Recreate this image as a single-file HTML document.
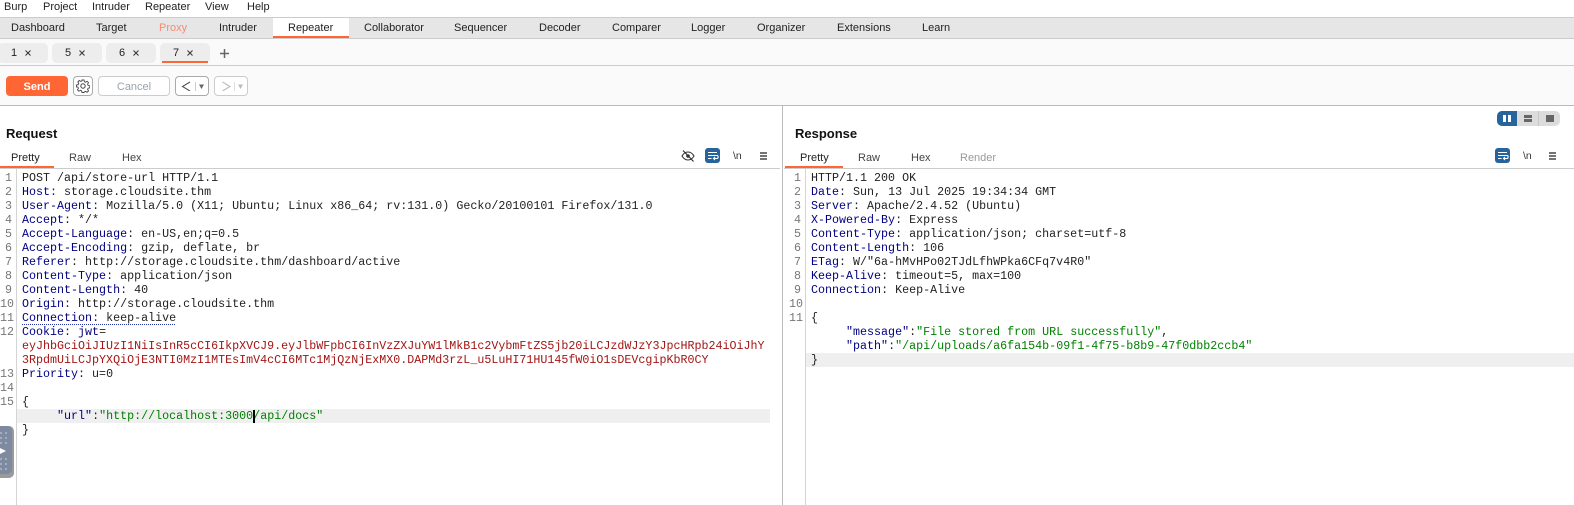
<!DOCTYPE html>
<html><head><meta charset="utf-8">
<style>
html,body{margin:0;padding:0;width:1574px;height:505px;overflow:hidden;background:#fff}
body{position:relative;font-family:"Liberation Sans",sans-serif;font-size:11px;color:#222}
.a{position:absolute;white-space:pre}
.box{position:absolute;box-sizing:border-box}
.m{position:absolute;font-family:"Liberation Mono",monospace;font-size:11.67px;letter-spacing:.01px;line-height:14px;height:14px;white-space:pre;color:#222}
.n{position:absolute;font-family:"Liberation Mono",monospace;font-size:11.67px;line-height:14px;height:14px;color:#777;text-align:right;width:12px}
.k{color:#000080}
.r{color:#a31515}
.g{color:#008000}
.tab{position:absolute;top:18px;height:21px;line-height:21px;font-size:11px;color:#222;white-space:pre}
.st{position:absolute;top:43px;height:20px;width:50px;background:#ededed;border-radius:5px}
.st span{position:absolute;top:4px;font-size:11px;color:#222}
.st svg{position:absolute;top:7px}
.sub{position:absolute;top:152px;font-size:11px;color:#444;white-space:pre}
</style></head><body>

<!-- menu -->
<div class="a" style="left:4px;top:0;line-height:14px">Burp</div>
<div class="a" style="left:43px;top:0;line-height:14px">Project</div>
<div class="a" style="left:92px;top:0;line-height:14px">Intruder</div>
<div class="a" style="left:145px;top:0;line-height:14px">Repeater</div>
<div class="a" style="left:205px;top:0;line-height:14px">View</div>
<div class="a" style="left:247px;top:0;line-height:14px">Help</div>

<!-- primary tabs -->
<div class="box" style="left:0;top:17px;width:1574px;height:22px;background:#e6e6e6;border-top:1px solid #ccc;border-bottom:1px solid #ccc"></div>
<div class="box" style="left:273px;top:18px;width:76px;height:20px;background:#fff;border-bottom:2px solid #ff6633"></div>
<div class="tab" style="left:11px">Dashboard</div>
<div class="tab" style="left:96px">Target</div>
<div class="tab" style="left:159px;color:#f98b73">Proxy</div>
<div class="tab" style="left:219px">Intruder</div>
<div class="tab" style="left:288px">Repeater</div>
<div class="tab" style="left:364px">Collaborator</div>
<div class="tab" style="left:454px">Sequencer</div>
<div class="tab" style="left:539px">Decoder</div>
<div class="tab" style="left:612px">Comparer</div>
<div class="tab" style="left:691px">Logger</div>
<div class="tab" style="left:757px">Organizer</div>
<div class="tab" style="left:837px">Extensions</div>
<div class="tab" style="left:922px">Learn</div>

<!-- subtabs -->
<div class="box" style="left:0;top:39px;width:1574px;height:27px;background:#fafafa;border-bottom:1px solid #ccc"></div>
<div class="st" style="left:-2px;width:50px"><span style="left:13px">1</span><svg style="left:27px" width="6" height="6"><path d="M.5.5l5 5M5.500.5l-5 5" stroke="#333" fill="none"/></svg></div>
<div class="st" style="left:52px"><span style="left:13px">5</span><svg style="left:27px" width="6" height="6"><path d="M.5.5l5 5M5.500.5l-5 5" stroke="#333" fill="none"/></svg></div>
<div class="st" style="left:106px"><span style="left:13px">6</span><svg style="left:27px" width="6" height="6"><path d="M.5.5l5 5M5.500.5l-5 5" stroke="#333" fill="none"/></svg></div>
<div class="st" style="left:160px"><span style="left:13px">7</span><svg style="left:27px" width="6" height="6"><path d="M.5.5l5 5M5.500.5l-5 5" stroke="#333" fill="none"/></svg></div>
<div class="box" style="left:162px;top:61px;width:46px;height:2px;background:#ff6633"></div>
<svg class="box" style="left:220px;top:49px" width="9" height="9"><path d="M4.500 0v9M0 4.500h9" stroke="#666" stroke-width="1.500" fill="none"/></svg>

<!-- toolbar -->
<div class="box" style="left:0;top:66px;width:1574px;height:40px;background:#fafafa;border-bottom:1px solid #bbb"></div>
<div class="box" style="left:6px;top:76px;width:62px;height:20px;background:#ff6633;border-radius:4px;color:#fff;font-weight:bold;font-size:11px;text-align:center;line-height:22px">Send</div>
<div class="box" style="left:73px;top:76px;width:20px;height:20px;border:1px solid #aaa;border-radius:4px;background:#fff"></div>
<svg class="box" style="left:76px;top:79px" width="14" height="14" viewBox="0 0 14 14"><circle cx="7" cy="7" r="2.200" fill="none" stroke="#444"/><path d="M6 1h2l.4 1.700 1.200.5 1.500-.9 1.400 1.400-.9 1.500.5 1.200 1.700.4v2l-1.700.4-.5 1.200.9 1.500-1.400 1.400-1.500-.9-1.200.5L8 13.500H6l-.4-1.700-1.200-.5-1.500.9-1.400-1.400.9-1.500-.5-1.200L.5 8V6l1.700-.4.5-1.200-.9-1.500 1.400-1.400 1.500.9 1.200-.5z" fill="none" stroke="#444" stroke-width=".9"/></svg>
<div class="box" style="left:98px;top:76px;width:72px;height:20px;border:1px solid #ccc;border-radius:4px;background:#fff;color:#9aa3ad;text-align:center;line-height:20px;font-size:11px">Cancel</div>
<div class="box" style="left:175px;top:76px;width:34px;height:20px;border:1px solid #aaa;border-radius:4px;background:#fff"></div>
<svg class="box" style="left:181px;top:81px" width="26" height="10"><path d="M9 1L1.500 5.500 9 10" fill="none" stroke="#555" stroke-width="1.100"/><path d="M14.500 1v9" stroke="#ccc"/><path d="M18 3.500h5l-2.500 4.500z" fill="#666"/></svg>
<div class="box" style="left:214px;top:76px;width:34px;height:20px;border:1px solid #ccc;border-radius:4px;background:#fff"></div>
<svg class="box" style="left:221px;top:81px" width="26" height="10"><path d="M1.500 1L9 5.500 1.500 10" fill="none" stroke="#bbb" stroke-width="1.100"/><path d="M13.500 1v9" stroke="#ddd"/><path d="M17 3.500h5l-2.500 4.500z" fill="#bbb"/></svg>

<!-- panel divider -->
<div class="box" style="left:782px;top:106px;width:1px;height:399px;background:#bbb"></div>

<!-- Request header -->
<div class="a" style="left:6px;top:126px;font-weight:bold;font-size:13px;color:#111">Request</div>
<div class="sub" style="left:11px;color:#222">Pretty</div>
<div class="sub" style="left:69px">Raw</div>
<div class="sub" style="left:122px">Hex</div>
<div class="box" style="left:0;top:168px;width:780px;height:1px;background:#ccc"></div>
<div class="box" style="left:0;top:166px;width:54px;height:2px;background:#ff6633"></div>

<svg class="box" style="left:681px;top:149px" width="14" height="14" viewBox="0 0 14 14"><path d="M1 7c1.500-2.500 3.500-4 6-4s4.500 1.500 6 4c-1.500 2.500-3.500 4-6 4S2.500 9.500 1 7z" fill="none" stroke="#333" stroke-width="1.100"/><circle cx="7" cy="7" r="1.800" fill="#333"/><path d="M2 1.500l10.500 11" stroke="#333" stroke-width="1.200"/></svg>
<div class="box" style="left:705px;top:148px;width:15px;height:15px;background:#27649c;border-radius:3px"></div>
<svg class="box" style="left:705px;top:148px" width="15" height="15"><path d="M3 4.500h9M3 7.500h9c1.500 0 1.500 3 0 3H8.500M3 10.500h3.500M10 9l-1.500 1.500L10 12" fill="none" stroke="#fff" stroke-width="1.100"/></svg>
<div class="a" style="left:733px;top:150px;font-size:10.500px;color:#333">\n</div>
<svg class="box" style="left:760px;top:152px" width="7" height="8"><path d="M0 1h7M0 4h7M0 7h7" stroke="#222" stroke-width="1.300"/></svg>

<!-- Response header -->
<div class="a" style="left:795px;top:126px;font-weight:bold;font-size:13px;color:#111">Response</div>
<div class="sub" style="left:800px;color:#222">Pretty</div>
<div class="sub" style="left:858px">Raw</div>
<div class="sub" style="left:911px">Hex</div>
<div class="sub" style="left:960px;color:#999">Render</div>
<div class="box" style="left:784px;top:168px;width:790px;height:1px;background:#ccc"></div>
<div class="box" style="left:785px;top:166px;width:58px;height:2px;background:#ff6633"></div>

<div class="box" style="left:1497px;top:111px;width:63px;height:15px;background:#dcdcdc;border-radius:5px"></div>
<div class="box" style="left:1497px;top:111px;width:20px;height:15px;background:#27649c;border-radius:5px 0 0 5px"></div>
<div class="box" style="left:1538px;top:111px;width:1px;height:15px;background:#c6c6c6"></div>
<div class="box" style="left:1503px;top:115px;width:3px;height:7px;background:#fff"></div>
<div class="box" style="left:1508px;top:115px;width:3px;height:7px;background:#fff"></div>
<div class="box" style="left:1524px;top:115px;width:8px;height:3px;background:#666"></div>
<div class="box" style="left:1524px;top:119px;width:8px;height:3px;background:#666"></div>
<div class="box" style="left:1546px;top:115px;width:8px;height:7px;background:#666"></div>

<div class="box" style="left:1495px;top:148px;width:15px;height:15px;background:#27649c;border-radius:3px"></div>
<svg class="box" style="left:1495px;top:148px" width="15" height="15"><path d="M3 4.500h9M3 7.500h9c1.500 0 1.500 3 0 3H8.500M3 10.500h3.500M10 9l-1.500 1.500L10 12" fill="none" stroke="#fff" stroke-width="1.100"/></svg>
<div class="a" style="left:1523px;top:150px;font-size:10.500px;color:#333">\n</div>
<svg class="box" style="left:1549px;top:152px" width="7" height="8"><path d="M0 1h7M0 4h7M0 7h7" stroke="#222" stroke-width="1.300"/></svg>

<!-- gutters -->
<div class="box" style="left:16px;top:169px;width:1px;height:336px;background:#d4d4d4"></div>
<div class="box" style="left:805px;top:169px;width:1px;height:336px;background:#d4d4d4"></div>

<!-- highlight rows -->
<div class="box" style="left:17px;top:409px;width:753px;height:14px;background:#efefef"></div>
<div class="box" style="left:806px;top:353px;width:768px;height:14px;background:#efefef"></div>

<!-- Request numbers -->
<div class="n" style="left:0;top:171px">1</div>
<div class="n" style="left:0;top:185px">2</div>
<div class="n" style="left:0;top:199px">3</div>
<div class="n" style="left:0;top:213px">4</div>
<div class="n" style="left:0;top:227px">5</div>
<div class="n" style="left:0;top:241px">6</div>
<div class="n" style="left:0;top:255px">7</div>
<div class="n" style="left:0;top:269px">8</div>
<div class="n" style="left:0;top:283px">9</div>
<div class="n" style="left:0;top:297px">10</div>
<div class="n" style="left:0;top:311px">11</div>
<div class="n" style="left:0;top:325px">12</div>
<div class="n" style="left:0;top:367px">13</div>
<div class="n" style="left:0;top:381px">14</div>
<div class="n" style="left:0;top:395px">15</div>

<!-- Request text -->
<div class="m" style="left:22px;top:171px">POST /api/store-url HTTP/1.1</div>
<div class="m" style="left:22px;top:185px"><span class="k">Host</span>: storage.cloudsite.thm</div>
<div class="m" style="left:22px;top:199px"><span class="k">User-Agent</span>: Mozilla/5.0 (X11; Ubuntu; Linux x86_64; rv:131.0) Gecko/20100101 Firefox/131.0</div>
<div class="m" style="left:22px;top:213px"><span class="k">Accept</span>: */*</div>
<div class="m" style="left:22px;top:227px"><span class="k">Accept-Language</span>: en-US,en;q=0.5</div>
<div class="m" style="left:22px;top:241px"><span class="k">Accept-Encoding</span>: gzip, deflate, br</div>
<div class="m" style="left:22px;top:255px"><span class="k">Referer</span>: http://storage.cloudsite.thm/dashboard/active</div>
<div class="m" style="left:22px;top:269px"><span class="k">Content-Type</span>: application/json</div>
<div class="m" style="left:22px;top:283px"><span class="k">Content-Length</span>: 40</div>
<div class="m" style="left:22px;top:297px"><span class="k">Origin</span>: http://storage.cloudsite.thm</div>
<div class="m" style="left:22px;top:311px"><span class="k">Connection</span>: keep-alive</div>
<div class="box" style="left:22px;top:324px;width:153px;height:0;border-top:1px dotted #2233aa"></div>
<div class="m" style="left:22px;top:325px"><span class="k">Cookie</span>: <span class="k">jwt</span>=</div>
<div class="m r" style="left:22px;top:339px">eyJhbGciOiJIUzI1NiIsInR5cCI6IkpXVCJ9.eyJlbWFpbCI6InVzZXJuYW1lMkB1c2VybmFtZS5jb20iLCJzdWJzY3JpcHRpb24iOiJhY</div>
<div class="m r" style="left:22px;top:353px">3RpdmUiLCJpYXQiOjE3NTI0MzI1MTEsImV4cCI6MTc1MjQzNjExMX0.DAPMd3rzL_u5LuHI71HU145fW0iO1sDEVcgipKbR0CY</div>
<div class="m" style="left:22px;top:367px"><span class="k">Priority</span>: u=0</div>
<div class="m" style="left:22px;top:395px">{</div>
<div class="m" style="left:22px;top:409px">     <span class="k">"url"</span>:<span class="g">"http://localhost:3000/api/docs"</span></div>
<div class="box" style="left:253px;top:410px;width:2px;height:13px;background:#000"></div>
<div class="m" style="left:22px;top:423px">}</div>

<!-- Response numbers -->
<div class="n" style="left:789px;top:171px">1</div>
<div class="n" style="left:789px;top:185px">2</div>
<div class="n" style="left:789px;top:199px">3</div>
<div class="n" style="left:789px;top:213px">4</div>
<div class="n" style="left:789px;top:227px">5</div>
<div class="n" style="left:789px;top:241px">6</div>
<div class="n" style="left:789px;top:255px">7</div>
<div class="n" style="left:789px;top:269px">8</div>
<div class="n" style="left:789px;top:283px">9</div>
<div class="n" style="left:789px;top:297px">10</div>
<div class="n" style="left:789px;top:311px">11</div>

<!-- Response text -->
<div class="m" style="left:811px;top:171px">HTTP/1.1 200 OK</div>
<div class="m" style="left:811px;top:185px"><span class="k">Date</span>: Sun, 13 Jul 2025 19:34:34 GMT</div>
<div class="m" style="left:811px;top:199px"><span class="k">Server</span>: Apache/2.4.52 (Ubuntu)</div>
<div class="m" style="left:811px;top:213px"><span class="k">X-Powered-By</span>: Express</div>
<div class="m" style="left:811px;top:227px"><span class="k">Content-Type</span>: application/json; charset=utf-8</div>
<div class="m" style="left:811px;top:241px"><span class="k">Content-Length</span>: 106</div>
<div class="m" style="left:811px;top:255px"><span class="k">ETag</span>: W/"6a-hMvHPo02TJdLfhWPka6CFq7v4R0"</div>
<div class="m" style="left:811px;top:269px"><span class="k">Keep-Alive</span>: timeout=5, max=100</div>
<div class="m" style="left:811px;top:283px"><span class="k">Connection</span>: Keep-Alive</div>
<div class="m" style="left:811px;top:311px">{</div>
<div class="m" style="left:811px;top:325px">     <span class="k">"message"</span>:<span class="g">"File stored from URL successfully"</span>,</div>
<div class="m" style="left:811px;top:339px">     <span class="k">"path"</span>:<span class="g">"/api/uploads/a6fa154b-09f1-4f75-b8b9-47f0dbb2ccb4"</span></div>
<div class="m" style="left:811px;top:353px">}</div>

<!-- left floating handle -->
<div class="box" style="left:-6px;top:426px;width:20px;height:52px;background:#9a9a9a;border-radius:0 5px 5px 0"></div>
<div class="box" style="left:-6px;top:426px;width:18px;height:48px;background:#7d8aa0;border-radius:0 5px 5px 0"></div>
<svg class="box" style="left:0;top:430px" width="11" height="42"><g fill="#a3adbd"><rect x="0" y="2" width="2" height="2"/><rect x="5" y="2" width="2" height="2"/><rect x="0" y="7" width="2" height="2"/><rect x="5" y="7" width="2" height="2"/><rect x="0" y="12" width="2" height="2"/><rect x="5" y="12" width="2" height="2"/><rect x="0" y="28" width="2" height="2"/><rect x="5" y="28" width="2" height="2"/><rect x="0" y="33" width="2" height="2"/><rect x="5" y="33" width="2" height="2"/><rect x="0" y="38" width="2" height="2"/><rect x="5" y="38" width="2" height="2"/></g><path d="M0 18l6 3-6 3z" fill="#fff"/></svg>

</body></html>
